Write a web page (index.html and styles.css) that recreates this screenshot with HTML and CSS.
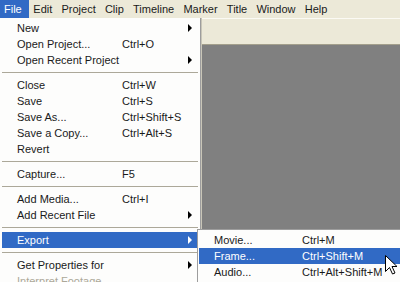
FILE: index.html
```html
<!DOCTYPE html>
<html lang="en">
<head>
  <meta charset="UTF-8">
  <title>File menu</title>
  <link rel="stylesheet" href="styles.css">
</head>
<body>

  <!-- MENU BAR -->
  <div class="menubar">
    <span class="menubar-item aberto">File</span>
    <span class="menubar-item">Edit</span>
    <span class="menubar-item">Project</span>
    <span class="menubar-item">Clip</span>
    <span class="menubar-item">Timeline</span>
    <span class="menubar-item">Marker</span>
    <span class="menubar-item">Title</span>
    <span class="menubar-item">Window</span>
    <span class="menubar-item">Help</span>
  </div>

  <!-- WORKSPACE -->
  <div class="area">
    <div class="toolbar"></div>
    <div class="linha-canvas">
      <div class="lado"></div>
      <div class="canvas"></div>
    </div>
  </div>

  <!-- FILE MENU -->
  <div class="menu menu-file">
    <div class="item"><span>New</span><span></span><span class="seta"></span></div>
    <div class="item"><span>Open Project...</span><span>Ctrl+O</span><span></span></div>
    <div class="item"><span>Open Recent Project</span><span></span><span class="seta"></span></div>
    <div class="separador"></div>
    <div class="item"><span>Close</span><span>Ctrl+W</span><span></span></div>
    <div class="item"><span>Save</span><span>Ctrl+S</span><span></span></div>
    <div class="item"><span>Save As...</span><span>Ctrl+Shift+S</span><span></span></div>
    <div class="item"><span>Save a Copy...</span><span>Ctrl+Alt+S</span><span></span></div>
    <div class="item"><span>Revert</span><span></span><span></span></div>
    <div class="separador"></div>
    <div class="item"><span>Capture...</span><span>F5</span><span></span></div>
    <div class="separador"></div>
    <div class="item"><span>Add Media...</span><span>Ctrl+I</span><span></span></div>
    <div class="item"><span>Add Recent File</span><span></span><span class="seta"></span></div>
    <div class="separador"></div>
    <div class="item ativo"><span>Export</span><span></span><span class="seta"></span></div>
    <div class="separador"></div>
    <div class="item"><span>Get Properties for</span><span></span><span class="seta"></span></div>
    <div class="item desativado"><span>Interpret Footage</span><span></span><span></span></div>
  </div>

  <!-- EXPORT SUBMENU -->
  <div class="menu submenu">
    <div class="item"><span>Movie...</span><span>Ctrl+M</span></div>
    <div class="item ativo"><span>Frame...</span><span>Ctrl+Shift+M</span></div>
    <div class="item"><span>Audio...</span><span>Ctrl+Alt+Shift+M</span></div>
  </div>

  <!-- MOUSE -->
  <svg class="cursor" width="13" height="20" viewBox="0 0 13 20">
    <path d="M0.5 0.5 L0.5 16.5 L4.5 12.5 L7.5 19 L10 18 L7 11.5 L12 11.5 Z" fill="#fff" stroke="#000" stroke-width="1" stroke-linejoin="miter"/>
  </svg>

</body>
</html>
```

FILE: styles.css
```css
body {
  margin: 0;
  width: 400px;
  height: 282px;
  overflow: hidden;
  position: relative;
  font-family: "Liberation Sans", Arial, sans-serif;
  font-size: 11px;
  color: #1a1a1a;
  background-color: #ece9d8;
}

/* barra de menu */
.menubar {
  display: flex;
  height: 18px;
  align-items: stretch;
  background-color: #ece9d8;
}

.menubar-item {
  display: flex;
  align-items: center;
  padding: 0 4.6px;
}

.menubar-item:first-child {
  padding-left: 4px;
  padding-right: 7px;
}

.menubar-item.aberto {
  background-color: #316ac5;
  color: white;
}

/* area de trabalho */
.area {
  display: flex;
  flex-direction: column;
  height: 264px;
}

.toolbar {
  height: 25px;
  border-top: 1px solid #fbfaf4;
  background-color: #ece9d8;
}

.linha-canvas {
  flex: 1;
  display: flex;
  border-top: 1px solid #a39f8c;
}

.lado {
  width: 199px;
}

.canvas {
  flex: 1;
  background-color: #808080;
  border-left: 2px solid #4d4d4d;
}

/* menus */
.menu {
  position: absolute;
  background-color: #fdfdfc;
}

.menu-file {
  left: 0;
  top: 18px;
  width: 196px;
  height: 270px;
  padding: 2px 2px 0 2px;
  border-right: 1px solid #9d9d9d;
  box-shadow: 1px 0 0 #c9c6b8;
}

.submenu {
  left: 197px;
  top: 229px;
  width: 201px;
  height: 60px;
  padding: 2px 2px 0 1px;
  border-top: 1px solid #9d9d9d;
  border-left: 1px solid #9d9d9d;
}

.item {
  display: grid;
  grid-template-columns: 105px 1fr 10px;
  align-items: center;
  height: 16px;
  padding-left: 15px;
  white-space: nowrap;
}

.submenu .item {
  grid-template-columns: 88px 1fr;
  padding-left: 15px;
}

.item.ativo {
  background-color: #316ac5;
  color: white;
}

.item.desativado {
  color: #aca899;
}

.seta {
  width: 0;
  height: 0;
  border-left: 4px solid #000;
  border-top: 4px solid transparent;
  border-bottom: 4px solid transparent;
}

.ativo .seta {
  border-left-color: white;
}

.separador {
  height: 9px;
  display: flex;
  align-items: center;
}

.separador::before {
  content: "";
  flex: 1;
  height: 1px;
  background-color: #aca899;
}

.cursor {
  position: absolute;
  left: 385px;
  top: 255px;
}
```
